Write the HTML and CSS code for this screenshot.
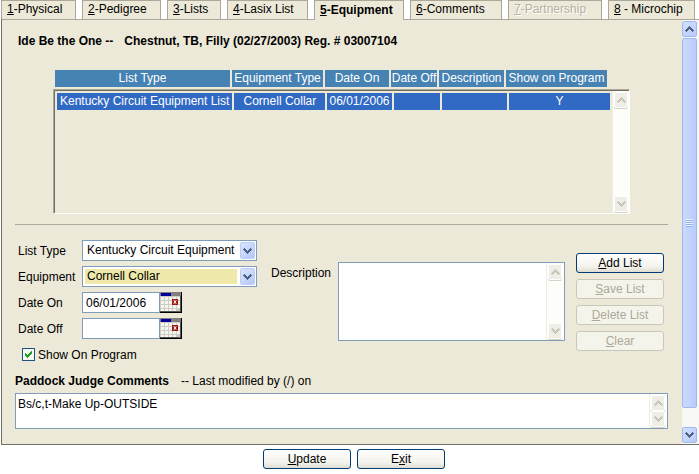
FILE: index.html
```html
<!DOCTYPE html>
<html lang="en">
<head>
<meta charset="utf-8">
<title>Equipment</title>
<meta name="viewport" content="width=device-width, initial-scale=1">
<link rel="stylesheet" href="styles.css">
</head>
<body>
<svg class="defs" aria-hidden="true">
  <symbol id="up" viewBox="0 0 9 6"><path d="M4 0h1v1h-1zM3 1h3v1h-3zM2 2h5v1h-5zM1 3h3v1h-3zM5 3h3v1h-3zM0 4h3v1h-3zM6 4h3v1h-3zM1 5h1v1h-1zM7 5h1v1h-1z"/></symbol>
  <symbol id="down" viewBox="0 0 9 6"><path d="M1 0h1v1h-1zM7 0h1v1h-1zM0 1h3v1h-3zM6 1h3v1h-3zM1 2h3v1h-3zM5 2h3v1h-3zM2 3h5v1h-5zM3 4h3v1h-3zM4 5h1v1h-1z"/></symbol>
  <symbol id="calendar" viewBox="0 0 22 21">
    <path fill="#000" d="M0 0h22v21H0z"/>
    <path fill="#cfccc4" d="M0 0h20v19H0z"/>
    <path fill="#808080" d="M0 0h21v4H0z"/>
    <path fill="#00009c" d="M1 1h10v3H1z"/>
    <path fill="#f6f5f0" d="M1 5h3v3H1zM5 5h3v3H5zM9 5h3v3H9zM13 5h3v3h-3zM17 5h3v3h-3zM1 9h3v3H1zM5 9h3v3H5zM9 9h3v3H9zM17 9h3v3h-3zM1 13h3v3H1zM5 13h3v3H5zM9 13h3v3H9zM13 13h3v3h-3zM17 13h3v3h-3zM1 17h3v2H1zM5 17h3v2H5zM9 17h3v2H9zM13 17h3v2h-3z"/>
    <path fill="#a01818" d="M12 7h6v6h-6z"/>
    <path fill="#f4e6e0" d="M14 9h2v2h-2z"/>
    <path fill="#c86a60" d="M13 8h4v1h-4zM13 11h4v1h-4z"/>
    <path fill="#555" d="M20 4h1v16H0v-1h20z"/>
  </symbol>
</svg>

<nav class="tabs">
  <a class="tab" href="#physical"><u>1</u>-Physical</a>
  <a class="tab" href="#pedigree"><u>2</u>-Pedigree</a>
  <a class="tab" href="#lists"><u>3</u>-Lists</a>
  <a class="tab" href="#lasix"><u>4</u>-Lasix List</a>
  <a class="tab active" href="#equipment" aria-current="page"><u>5</u>-Equipment</a>
  <a class="tab" href="#comments"><u>6</u>-Comments</a>
  <a class="tab disabled" aria-disabled="true"><u>7</u>-Partnership</a>
  <a class="tab" href="#microchip"><u>8</u> - Microchip</a>
</nav>

<main class="panel">
  <div class="content">
    <h1 class="title"><span>Ide Be the One --</span><span>Chestnut, TB, Filly (02/27/2003) Reg. # 03007104</span></h1>

    <section class="list">
      <table class="grid">
        <colgroup><col class="c1"><col class="c2"><col class="c3"><col class="c4"><col class="c5"><col class="c6"></colgroup>
        <thead><tr><th>List Type</th><th>Equipment Type</th><th>Date On</th><th>Date Off</th><th>Description</th><th>Show on Program</th></tr></thead>
      </table>
      <div class="listbox">
        <table class="grid">
          <colgroup><col class="c1"><col class="c2"><col class="c3"><col class="c4"><col class="c5"><col class="c6"></colgroup>
          <tbody><tr><td>Kentucky Circuit Equipment List</td><td>Cornell Collar</td><td>06/01/2006</td><td></td><td></td><td>Y</td></tr></tbody>
        </table>
        <div class="bar" aria-hidden="true"><span class="knob"><svg><use href="#up"/></svg></span><span class="knob"><svg><use href="#down"/></svg></span></div>
      </div>
    </section>

    <hr class="rule">

    <form class="form">
      <div class="fields">
        <label for="type">List Type</label>
        <div class="combo">
          <select id="type"><option>Kentucky Circuit Equipment</option></select>
          <span class="drop"><svg><use href="#down"/></svg></span>
        </div>
        <label for="equip">Equipment</label>
        <div class="combo focused">
          <select id="equip"><option>Cornell Collar</option></select>
          <span class="drop"><svg><use href="#down"/></svg></span>
        </div>
        <label for="on">Date On</label>
        <div class="date"><input id="on" type="text" value="06/01/2006"><button type="button" class="pick" aria-label="Pick date on"><svg><use href="#calendar"/></svg></button></div>
        <label for="off">Date Off</label>
        <div class="date"><input id="off" type="text"><button type="button" class="pick" aria-label="Pick date off"><svg><use href="#calendar"/></svg></button></div>
        <div class="check">
          <span class="tick"><input id="show" type="checkbox" checked><svg viewBox="0 0 7 7"><path d="M0 2h1v1h1v1h1v-1h1v-1h1v-1h1v-1h1v3h-1v1h-1v1h-1v1h-1v1h-1v-1h-1v-1h-1z"/></svg></span>
          <label for="show">Show On Program</label>
        </div>
      </div>
      <div class="describe">
        <label for="desc">Description</label>
        <div class="memo tall">
          <textarea id="desc"></textarea>
          <div class="bar" aria-hidden="true"><span class="knob"><svg><use href="#up"/></svg></span><span class="knob"><svg><use href="#down"/></svg></span></div>
        </div>
      </div>
      <div class="actions">
        <button type="button" class="btn"><u>A</u>dd List</button>
        <button type="button" class="btn" disabled><u>S</u>ave List</button>
        <button type="button" class="btn" disabled><u>D</u>elete List</button>
        <button type="button" class="btn" disabled><u>C</u>lear</button>
      </div>
    </form>

    <section class="comments">
      <div class="caption"><label for="judge">Paddock Judge Comments</label><span>-- Last modified by (/) on</span></div>
      <div class="memo">
        <textarea id="judge">Bs/c,t-Make Up-OUTSIDE</textarea>
        <div class="bar" aria-hidden="true"><span class="knob"><svg><use href="#up"/></svg></span><span class="knob"><svg><use href="#down"/></svg></span></div>
      </div>
    </section>
  </div>

  <div class="scroll" aria-hidden="true">
    <span class="end"><svg><use href="#up"/></svg></span>
    <span class="thumb"><i></i></span>
    <span class="end"><svg><use href="#down"/></svg></span>
  </div>
</main>

<footer class="footer">
  <button type="button" class="btn"><u>U</u>pdate</button>
  <button type="button" class="btn">E<u>x</u>it</button>
</footer>
</body>
</html>
```
FILE: styles.css
```css
* { box-sizing: border-box; }

body {
  margin: 0;
  background: #fff;
  color: #000;
  font: 12px/16px "Liberation Sans", Arial, sans-serif;
}

svg { display: block; width: 9px; height: 6px; fill: currentColor; shape-rendering: crispEdges; }
.defs { position: absolute; width: 0; height: 0; }
button, input, select, textarea { font: inherit; color: inherit; margin: 0; }
u { text-underline-offset: 1px; }

/* Tabs */
.tabs {
  display: grid;
  grid-template-columns: 75fr 79fr 54fr 81fr 90fr 92fr 94fr 87fr;
  gap: 6px;
  padding: 0 4px 0 1px;
}
.tab {
  height: 19px;
  padding: 0 0 0 5px;
  background: #ece9d8;
  border: 1px solid #aca899;
  border-bottom: 0;
  color: #000;
  text-decoration: none;
  white-space: nowrap;
}
.tab.active {
  position: relative;
  height: 20px;
  margin-bottom: -1px;
  padding-top: 1px;
  font-weight: bold;
}
.tab.disabled { color: #b5b2a3; text-shadow: 1px 1px #fff; }

/* Panel */
.panel {
  display: flex;
  margin-left: 1px;
  background: #ece9d8;
  border: solid #716f64;
  border-width: 1px 0 1px 1px;
  border-top-color: #aca899;
}
.content { flex: 1; min-width: 0; padding: 13px 14px 15px 13px; }

.title { display: flex; gap: 11px; margin: 0 0 19px 3px; font-size: 12px; line-height: 16px; }

/* Equipment list */
.list { margin: 0 38px; }
.grid {
  width: calc(100% - 21px);
  table-layout: fixed;
  border-spacing: 2px;
  color: #fff;
}
.listbox .grid { width: 100%; }
.grid th, .grid td {
  height: 17px;
  padding: 0;
  font-weight: normal;
  line-height: 17px;
  text-align: center;
  white-space: nowrap;
}
.grid th { background: #4682b4; }
.grid td { background: #316ac5; }
.c1 { width: 175px; }
.c2 { width: 91px; }
.c3 { width: 64px; }
.c4 { width: 46px; }
.c5 { width: 65px; }
.c6 { width: 101px; }
.listbox {
  display: flex;
  align-items: flex-start;
  min-height: 125px;
  padding: 1px 0 0 1px;
  border: 1px solid;
  border-color: #aca899 #fff #fff #aca899;
  box-shadow: inset 1px 1px #716f64;
}
.listbox .bar { align-self: stretch; }

/* Inactive scroll bars */
.bar {
  display: flex;
  flex: none;
  flex-direction: column;
  justify-content: space-between;
  width: 17px;
  padding: 1px;
  background: #fdfdfa;
  border-left: 1px solid #eeede5;
}
.knob {
  display: grid;
  place-items: center;
  height: 16px;
  background: #efeee6;
  border: 1px solid #fff;
  border-radius: 2px;
  box-shadow: 0 1px #d5d3c4;
  color: #c9c7ba;
}

.rule { height: 1px; margin: 10px 0 15px; border: 0; background: #aca899; }

/* Entry form */
.form { display: flex; padding: 0 4px 0 3px; }
.fields {
  display: grid;
  grid-template-columns: 64px 175px;
  grid-auto-rows: 21px;
  gap: 5px 0;
  align-items: center;
}
.fields label, .describe label { white-space: nowrap; }

.combo { position: relative; height: 21px; padding: 2px; background: #fff; border: 1px solid #7f9db9; }
.combo select {
  display: block;
  appearance: none;
  width: 152px;
  height: 15px;
  padding: 0 0 0 2px;
  background: #fff;
  border: 0;
  outline: 0;
  line-height: 15px;
}
.combo.focused select { background: #eee8aa; }
.drop {
  position: absolute;
  top: 1px;
  right: 1px;
  display: grid;
  place-items: center;
  width: 15px;
  height: 17px;
  background: linear-gradient(135deg, #dbe5ff, #b3c8f8);
  border: 1px solid #bccdf5;
  border-radius: 2px;
  color: #4d6185;
  pointer-events: none;
}

.date { display: flex; }
.date input { width: 78px; height: 21px; padding: 0 3px; background: #fff; border: 1px solid #7f9db9; }
.pick { width: 22px; height: 21px; padding: 0; background: none; border: 0; }
.pick svg { width: 22px; height: 21px; }

.check { display: flex; grid-column: 1 / -1; gap: 3px; align-items: center; padding-left: 4px; }
.tick { position: relative; width: 13px; height: 13px; }
.tick input { display: block; appearance: none; width: 13px; height: 13px; background: #f6f6f2; border: 1px solid #1d5281; }
.tick svg { position: absolute; top: 3px; left: 3px; width: 7px; height: 7px; color: #21a121; pointer-events: none; visibility: hidden; }
.tick input:checked + svg { visibility: visible; }

.describe { display: flex; flex: 1; gap: 4px; align-items: flex-start; margin: 22px 11px 0 14px; }
.describe label { width: 63px; padding-top: 3px; }
.memo { display: flex; flex: 1; height: 36px; padding-right: 1px; background: #fff; border: 1px solid #7f9db9; }
.memo.tall { height: 79px; }
.memo textarea { flex: 1; min-width: 0; padding: 2px; background: none; border: 0; outline: 0; resize: none; overflow: hidden; }

.actions { display: flex; flex-direction: column; gap: 6px; margin-top: 13px; }
.btn {
  width: 88px;
  height: 20px;
  padding: 0;
  background: linear-gradient(#fff, #f3f2ec 70%, #dfdcd0);
  border: 1px solid #003c74;
  border-radius: 3px;
  line-height: 16px;
}
.btn:disabled { background: #f5f4ea; border-color: #c9c7ba; color: #aca899; }

/* Comments */
.comments { margin-top: 8px; }
.caption { display: flex; gap: 12px; margin-bottom: 4px; }
.caption label { font-weight: bold; }

/* Panel scroll bar */
.scroll {
  display: flex;
  flex: none;
  flex-direction: column;
  gap: 1px;
  width: 17px;
  padding: 1px 2px 1px 0;
  background: #f8f8f4;
}
.end {
  display: grid;
  place-items: center;
  height: 16px;
  background: linear-gradient(135deg, #d3e0ff, #b7cbfa);
  border: 1px solid #9fb8f0;
  border-radius: 2px;
  color: #4d6185;
}
.thumb {
  display: grid;
  flex: 1;
  place-items: center;
  margin-bottom: 18px;
  background: linear-gradient(90deg, #cbdaff, #b9cbfa);
  border: 1px solid #9fb8f0;
  border-radius: 2px;
}
.thumb i { width: 7px; height: 8px; background: repeating-linear-gradient(#eef4ff 0 1px, #8cb0f8 1px 2px); }

.footer { display: flex; gap: 6px; justify-content: center; padding: 4px 0 4px 9px; }
```
